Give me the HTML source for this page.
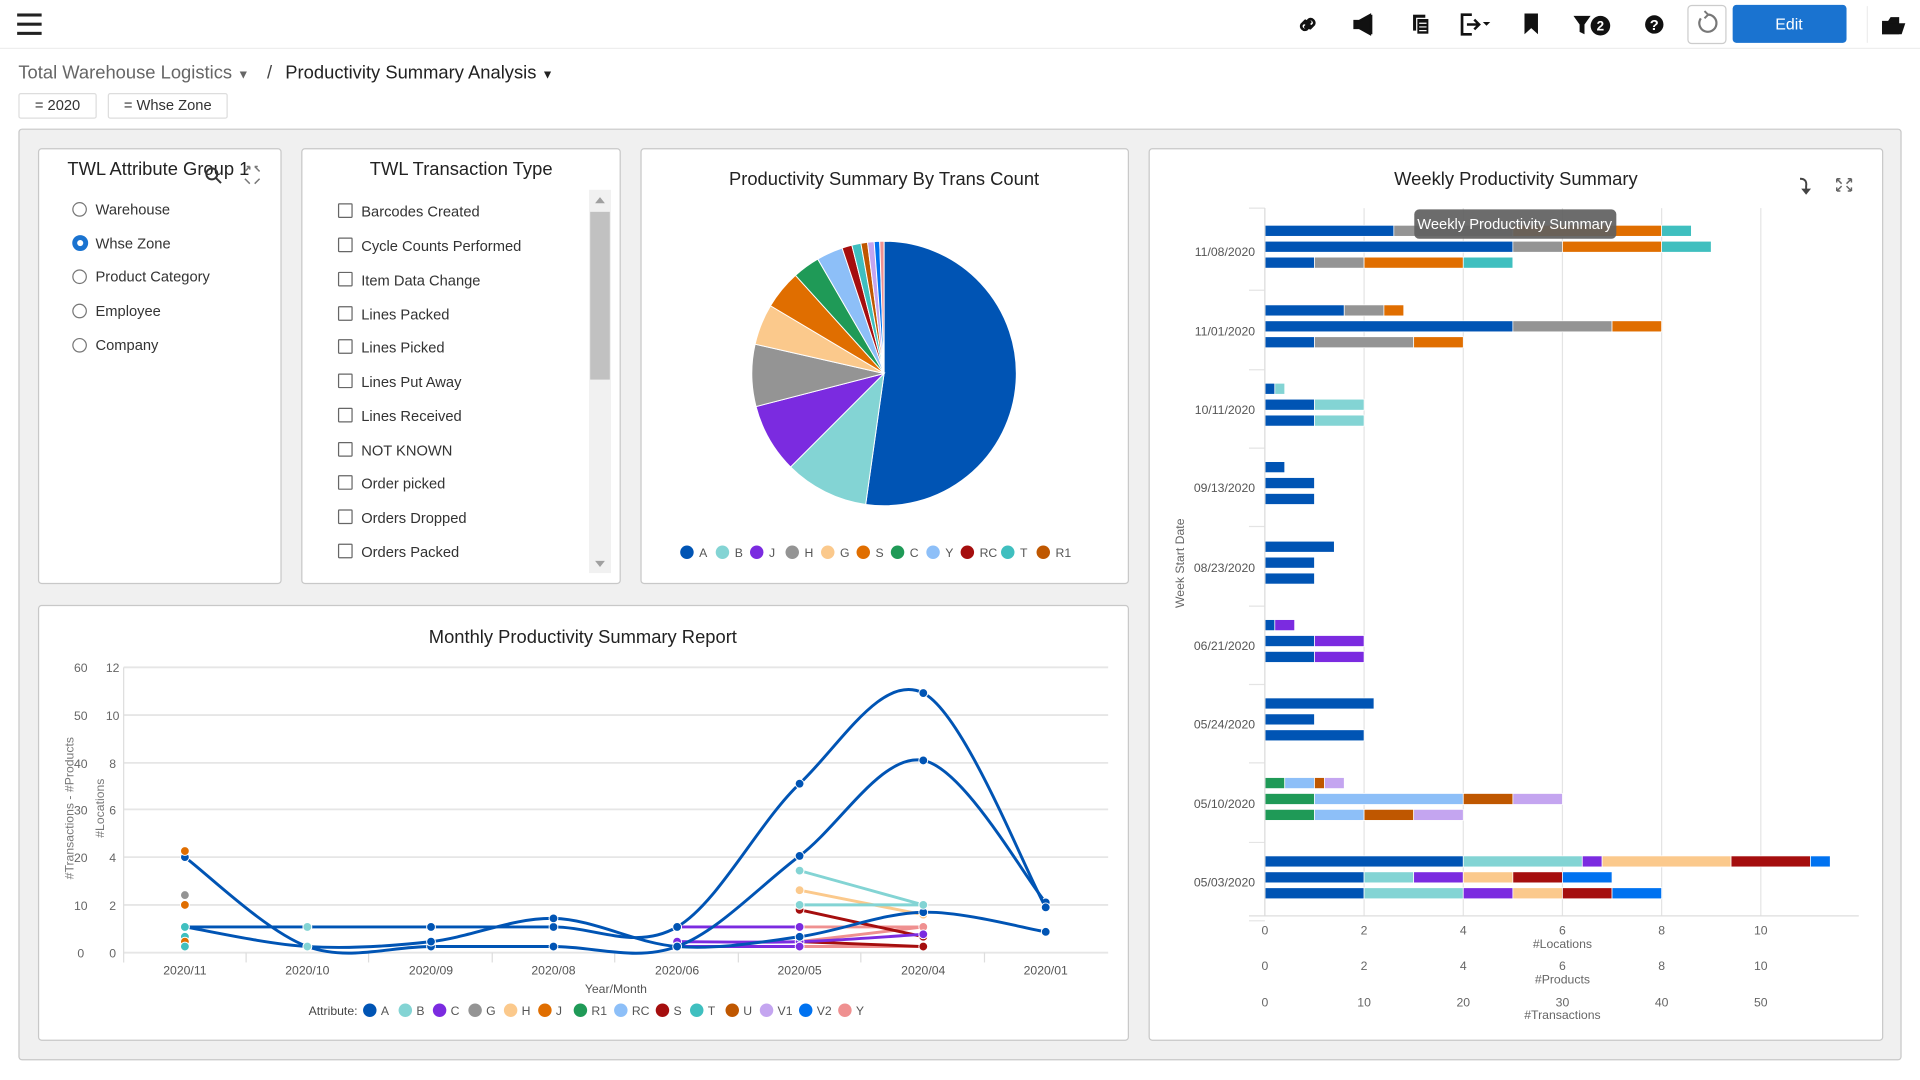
<!DOCTYPE html>
<html><head><meta charset="utf-8">
<style>
html,body{margin:0;padding:0;width:1920px;height:1080px;overflow:hidden;background:#fff;font-family:"Liberation Sans",sans-serif;}
#w{position:absolute;left:0;top:0;width:1568px;height:882px;transform:scale(1.22449);transform-origin:0 0;}
.a{position:absolute;}
.panel{position:absolute;background:#fff;border:1px solid #c8c8c8;border-radius:3px;box-sizing:border-box;}
.t{position:absolute;font-size:15px;color:#222;white-space:nowrap;}
.lbl{position:absolute;font-size:12px;color:#333;white-space:nowrap;}
.rad{position:absolute;width:10px;height:10px;border:1.5px solid #777;border-radius:50%;}
.chk{position:absolute;width:10px;height:10px;border:1.5px solid #666;border-radius:1px;}
</style></head><body>
<div id="w">
<!-- top bar -->
<div class="a" style="left:0;top:0;width:1568px;height:39px;border-bottom:1px solid #eee;"></div>
<svg class="a" style="left:0;top:0" width="1568" height="40">
 <g fill="#222">
  <rect x="14" y="11" width="20" height="2.5"/><rect x="14" y="18.5" width="20" height="2.5"/><rect x="14" y="26" width="20" height="2.5"/>
 </g>
 <g fill="none" stroke="#111" stroke-width="2.2" stroke-linecap="round">
  <path d="M1066 17 l-3 3 a3 3 0 0 0 4 4 l3 -3 M1070 23 l3 -3 a3 3 0 0 0 -4 -4 l-3 3 M1066 22 l4 -4"/>
 </g>
 <path d="M1106 17 h4 l9 -5 v16 l-9 -5 h-4z M1120 12 v16" fill="#111" stroke="#111" stroke-width="1.5"/>
 <rect x="1154" y="12" width="10" height="13" fill="#111"/><rect x="1157" y="15" width="10" height="13" fill="#111" stroke="#fff" stroke-width="1"/>
 <path d="M1159 19h6M1159 22h6M1159 25h6" stroke="#fff" stroke-width="1"/>
 <path d="M1202 12 h-8 v16 h8" fill="none" stroke="#111" stroke-width="2.2"/>
 <path d="M1198 20 h10 M1204 16 l4 4 -4 4" fill="none" stroke="#111" stroke-width="2"/>
 <path d="M1211 18 h6 l-3 3z" fill="#111"/>
 <path d="M1245 11 h11 v17 l-5.5 -5 -5.5 5z" fill="#111"/>
 <path d="M1285 13 h14 l-5 7 v8 l-4 -2 v-6z" fill="#111"/>
 <circle cx="1307" cy="21" r="8" fill="#111"/><text x="1307" y="25" font-size="11" font-weight="bold" fill="#fff" text-anchor="middle">2</text>
 <circle cx="1351" cy="20" r="7.5" fill="#111"/><text x="1351" y="24.5" font-size="12" font-weight="bold" fill="#fff" text-anchor="middle">?</text>
 <rect x="1378.5" y="4.5" width="31" height="31" rx="3" fill="#fff" stroke="#ccc"/>
 <path d="M1389 15 a7 7 0 1 0 5 -3" fill="none" stroke="#777" stroke-width="1.8"/><path d="M1392 9 l3 3 -3 3" fill="none" stroke="#777" stroke-width="1.6"/>
 <rect x="1415" y="4" width="93" height="31" rx="3" fill="#1a73d0"/>
 <text x="1461" y="24" font-size="13" fill="#fff" text-anchor="middle">Edit</text>
 <line x1="1525" y1="5" x2="1525" y2="35" stroke="#eee"/>
 <path d="M1537 17 h5 l2 -3 h7 v14 h-14z" fill="#111"/><path d="M1537 19 h19 l-3 9 h-16z" fill="#111"/>
</svg>
<!-- breadcrumb -->
<div class="a" style="left:15px;top:51px;font-size:15px;color:#666;">Total Warehouse Logistics <span style="font-size:10px">▼</span></div>
<div class="a" style="left:218px;top:51px;font-size:15px;color:#444;">/</div>
<div class="a" style="left:233px;top:51px;font-size:15px;color:#222;">Productivity Summary Analysis <span style="font-size:10px">▼</span></div>
<div class="a" style="left:15px;top:76px;width:64px;height:21px;border:1px solid #ddd;border-radius:2px;box-sizing:border-box;font-size:12px;color:#333;text-align:center;line-height:19px;">= 2020</div>
<div class="a" style="left:88px;top:76px;width:98px;height:21px;border:1px solid #ddd;border-radius:2px;box-sizing:border-box;font-size:12px;color:#333;text-align:center;line-height:19px;">= Whse Zone</div>
<!-- container -->
<div class="a" style="left:15px;top:105px;width:1538px;height:761px;background:#f0f0f0;border:1px solid #c8c8c8;border-radius:3px;box-sizing:border-box;"></div>
<!-- panel 1 -->
<div class="panel" style="left:31px;top:121px;width:199px;height:356px;"></div>
<div class="t" style="left:55px;top:130px;">TWL Attribute Group 1</div>
<div class="rad" style="left:59px;top:165px"></div><div class="lbl" style="left:78px;top:164px">Warehouse</div>
<div class="rad" style="left:59px;top:192px;border:4px solid #1a73d0;width:5px;height:5px;"></div><div class="lbl" style="left:78px;top:192px">Whse Zone</div>
<div class="rad" style="left:59px;top:220px"></div><div class="lbl" style="left:78px;top:219px">Product Category</div>
<div class="rad" style="left:59px;top:248px"></div><div class="lbl" style="left:78px;top:247px">Employee</div>
<div class="rad" style="left:59px;top:276px"></div><div class="lbl" style="left:78px;top:275px">Company</div>
<!-- panel 2 -->
<div class="panel" style="left:246px;top:121px;width:261px;height:356px;"></div>
<div class="t" style="left:302px;top:130px;">TWL Transaction Type</div>
<div class="a" style="left:481px;top:155px;width:18px;height:313px;background:#f1f1f1;"></div>
<div class="a" style="left:482px;top:173px;width:16px;height:137px;background:#c1c1c1;"></div>
<div class="chk" style="left:276px;top:166px"></div><div class="lbl" style="left:295px;top:166px">Barcodes Created</div>
<div class="chk" style="left:276px;top:194px"></div><div class="lbl" style="left:295px;top:194px">Cycle Counts Performed</div>
<div class="chk" style="left:276px;top:222px"></div><div class="lbl" style="left:295px;top:222px">Item Data Change</div>
<div class="chk" style="left:276px;top:250px"></div><div class="lbl" style="left:295px;top:250px">Lines Packed</div>
<div class="chk" style="left:276px;top:277px"></div><div class="lbl" style="left:295px;top:277px">Lines Picked</div>
<div class="chk" style="left:276px;top:305px"></div><div class="lbl" style="left:295px;top:305px">Lines Put Away</div>
<div class="chk" style="left:276px;top:333px"></div><div class="lbl" style="left:295px;top:333px">Lines Received</div>
<div class="chk" style="left:276px;top:361px"></div><div class="lbl" style="left:295px;top:361px">NOT KNOWN</div>
<div class="chk" style="left:276px;top:388px"></div><div class="lbl" style="left:295px;top:388px">Order picked</div>
<div class="chk" style="left:276px;top:416px"></div><div class="lbl" style="left:295px;top:416px">Orders Dropped</div>
<div class="chk" style="left:276px;top:444px"></div><div class="lbl" style="left:295px;top:444px">Orders Packed</div>
<!-- panels 3-5 -->
<div class="panel" style="left:523px;top:121px;width:399px;height:356px;"></div>
<div class="panel" style="left:938px;top:121px;width:600px;height:729px;"></div>
<div class="panel" style="left:31px;top:494px;width:891px;height:356px;"></div>
<svg id="s" class="a" style="left:0;top:0" width="1568" height="882" font-family="Liberation Sans, sans-serif">
 <path d="M486 166 l4 -5 4 5z M486 458 l4 5 4 -5z" fill="#a0a0a0"/>
 <g fill="none" stroke="#333" stroke-width="1.6"><circle cx="173" cy="142" r="4.5"/><path d="M176.5 145.5 l4 4"/></g>
 <g fill="none" stroke="#777" stroke-width="1.2"><path d="M200 140 l4 -4 M204 136 h-2.5 M204 136 v2.5 M212 140 l-4 -4 M208 136 h2.5 M212 140 v0 M200 146 l4 4 M212 146 l-4 4"/></g>
 <g fill="none" stroke="#666" stroke-width="1.2"><path d="M1500 146 l4 4 M1512 146 l-4 4 M1500 156 l4 -4 M1512 156 l-4 -4 M1500 146 v3 M1500 146 h3 M1512 146 v3 M1512 146 h-3 M1500 156 v-3 M1500 156 h3 M1512 156 v-3 M1512 156 h-3"/></g>
 <path d="M1470 146 q6 0 5 6 v5" fill="none" stroke="#444" stroke-width="1.6"/><path d="M1471 154 l4 5 4 -5z" fill="#444"/>
 <text x="722" y="151" font-size="15" fill="#222" text-anchor="middle">Productivity Summary By Trans Count</text>
 <text x="1238" y="151" font-size="15" fill="#222" text-anchor="middle">Weekly Productivity Summary</text>
 <text x="476" y="525" font-size="15" fill="#222" text-anchor="middle">Monthly Productivity Summary Report</text>
 <g id="pie"></g><g id="pleg" font-size="10" fill="#555"></g>
 <g id="wk"></g>
 <g id="mo"></g>
</svg>
</div>
<script>
var NS="http://www.w3.org/2000/svg";
function el(p,t,a,txt){var e=document.createElementNS(NS,t);for(var k in a)e.setAttribute(k,a[k]);if(txt!=null)e.textContent=txt;p.appendChild(e);return e;}
var C={A:"#0054b4",B:"#83d4d4",J:"#7b2be0",G:"#949494",H:"#fbc98c",S:"#e06e00",C:"#1f9a57",Y:"#8dbff8",RC:"#a50e0e",T:"#3fbfbf",R1:"#bf5700",V1:"#c4a5f0",V2:"#0072f0",P:"#ef9090",O:"#e06e00",U:"#bf5700"};
// pie
var pie=document.getElementById("pie"),cx=722,cy=305,r=108;
var sl=[["A",0,188],["B",188,225],["J",225,255.5],["G",255.5,282.8],["H",282.8,300.8],["S",300.8,317.9],["C",317.9,329.9],["Y",329.9,341.5],["RC",341.5,345.9],["T",345.9,349.9],["R1",349.9,352.8],["V1",352.8,355.7],["V2",355.7,358.1],["P",358.1,360]];
function pt(a){a=a*Math.PI/180;return [cx+r*Math.sin(a),cy-r*Math.cos(a)];}
sl.forEach(function(s){var p1=pt(s[1]),p2=pt(s[2]);var lg=(s[2]-s[1])>180?1:0;
 el(pie,"path",{d:"M"+cx+" "+cy+"L"+p1[0]+" "+p1[1]+"A"+r+" "+r+" 0 "+lg+" 1 "+p2[0]+" "+p2[1]+"Z",fill:C[s[0]],stroke:"#fff","stroke-width":"0.8"});});
var pl=document.getElementById("pleg");
[["A",561],["B",590],["J",618],["H",647],["G",676],["S",705],["C",733],["Y",762],["RC",790],["T",823],["R1",852]].forEach(function(l){
 el(pl,"circle",{cx:l[1],cy:451,r:5.5,fill:C[l[0]=="H"?"G":l[0]=="G"?"H":l[0]]});el(pl,"text",{x:l[1]+10,y:455},l[0]);});
// weekly
var wk=document.getElementById("wk"),x0=1033,u=40.5;
for(var i=0;i<=5;i++){var gx=x0+i*81;el(wk,"line",{x1:gx,y1:170,x2:gx,y2:748,stroke:"#e4e4e4"});
 el(wk,"text",{x:gx,y:763,"font-size":10,fill:"#666","text-anchor":"middle"},i*2);
 el(wk,"text",{x:gx,y:792,"font-size":10,fill:"#666","text-anchor":"middle"},i*2);
 el(wk,"text",{x:gx,y:822,"font-size":10,fill:"#666","text-anchor":"middle"},i*10);}
el(wk,"line",{x1:1020,y1:748,x2:1518,y2:748,stroke:"#ddd"});
el(wk,"text",{x:1276,y:774,"font-size":10,fill:"#666","text-anchor":"middle"},"#Locations");
el(wk,"text",{x:1276,y:803,"font-size":10,fill:"#666","text-anchor":"middle"},"#Products");
el(wk,"text",{x:1276,y:832,"font-size":10,fill:"#666","text-anchor":"middle"},"#Transactions");
el(wk,"text",{x:967,y:460,"font-size":10,fill:"#666","text-anchor":"middle",transform:"rotate(-90 967 460)"},"Week Start Date");
var G=[["11/08/2020",205,[[["A",2.6],["G",5],["S",8],["T",8.6]],[["A",5],["G",6],["S",8],["T",9]],[["A",1],["G",2],["S",4],["T",5]]]],
["11/01/2020",270,[[["A",1.6],["G",2.4],["S",2.8]],[["A",5],["G",7],["S",8]],[["A",1],["G",3],["S",4]]]],
["10/11/2020",334,[[["A",0.2],["B",0.4]],[["A",1],["B",2]],[["A",1],["B",2]]]],
["09/13/2020",398,[[["A",0.4]],[["A",1]],[["A",1]]]],
["08/23/2020",463,[[["A",1.4]],[["A",1]],[["A",1]]]],
["06/21/2020",527,[[["A",0.2],["J",0.6]],[["A",1],["J",2]],[["A",1],["J",2]]]],
["05/24/2020",591,[[["A",2.2]],[["A",1]],[["A",2]]]],
["05/10/2020",656,[[["C",0.4],["Y",1],["U",1.2],["V1",1.6]],[["C",1],["Y",4],["U",5],["V1",6]],[["C",1],["Y",2],["U",3],["V1",4]]]],
["05/03/2020",720,[[["A",4],["B",6.4],["J",6.8],["H",9.4],["RC",11],["V2",11.4]],[["A",2],["B",3],["J",4],["H",5],["RC",6],["V2",7]],[["A",2],["B",4],["J",5],["H",6],["RC",7],["V2",8]]]]];
G.forEach(function(g,gi){var y=g[1];el(wk,"text",{x:1025,y:y+4,"font-size":10,fill:"#555","text-anchor":"end"},g[0]);
 el(wk,"line",{x1:1020,y1:y+32,x2:1033,y2:y+32,stroke:"#e4e4e4"});
 g[2].forEach(function(b,bi){var by=y-21+bi*13,s=0;b.forEach(function(seg){
  el(wk,"rect",{x:x0+s*u,y:by,width:(seg[1]-s)*u,height:9,fill:C[seg[0]],stroke:"#fff","stroke-width":0.6});s=seg[1];});});});
el(wk,"line",{x1:1020,y1:170,x2:1033,y2:170,stroke:"#e4e4e4"});
el(wk,"line",{x1:1033,y1:170,x2:1033,y2:748,stroke:"#ddd"});
el(wk,"rect",{x:1155,y:171,width:165,height:24,rx:4,fill:"rgba(95,95,95,0.92)"});
el(wk,"text",{x:1237,y:187,"font-size":12,fill:"#fff","text-anchor":"middle"},"Weekly Productivity Summary");
// monthly
var mo=document.getElementById("mo");
var ys=[545,584,623,661,700,739,778],lv=["60","50","40","30","20","10","0"],rv=["12","10","8","6","4","2","0"];
ys.forEach(function(y,i){el(mo,"line",{x1:101,y1:y,x2:905,y2:y,stroke:"#e6e6e6","stroke-width":1.5});
 el(mo,"text",{x:66,y:y+4,"font-size":10,fill:"#666","text-anchor":"middle"},lv[i]);
 el(mo,"text",{x:92,y:y+4,"font-size":10,fill:"#666","text-anchor":"middle"},rv[i]);});
el(mo,"line",{x1:101,y1:545,x2:101,y2:786,stroke:"#ddd"});
var xs=[151,251,352,452,553,653,754,854],xl=["2020/11","2020/10","2020/09","2020/08","2020/06","2020/05","2020/04","2020/01"];
xs.forEach(function(x,i){el(mo,"text",{x:x,y:796,"font-size":10,fill:"#555","text-anchor":"middle"},xl[i]);if(i<7)el(mo,"line",{x1:x+50,y1:778,x2:x+50,y2:786,stroke:"#ddd"});});
el(mo,"text",{x:503,y:811,"font-size":10,fill:"#555","text-anchor":"middle"},"Year/Month");
el(mo,"text",{x:60,y:660,"font-size":10,fill:"#777","text-anchor":"middle",transform:"rotate(-90 60 660)"},"#Transactions  -  #Products");
el(mo,"text",{x:85,y:660,"font-size":10,fill:"#777","text-anchor":"middle",transform:"rotate(-90 85 660)"},"#Locations");
function cr(p){var d="M"+p[0][0]+" "+p[0][1];for(var i=0;i<p.length-1;i++){var p0=p[i-1]||p[i],p1=p[i],p2=p[i+1],p3=p[i+2]||p2;
 d+="C"+(p1[0]+(p2[0]-p0[0])/6)+" "+(p1[1]+(p2[1]-p0[1])/6)+" "+(p2[0]-(p3[0]-p1[0])/6)+" "+(p2[1]-(p3[1]-p1[1])/6)+" "+p2[0]+" "+p2[1];}return d;}
function line(c,p,dots){el(mo,"path",{d:cr(p),fill:"none",stroke:c,"stroke-width":2.4});if(dots!==false)p.forEach(function(q){el(mo,"circle",{cx:q[0],cy:q[1],r:3.6,fill:c,stroke:"#fff","stroke-width":0.8});});}
line(C.P,[[653,757],[754,757]]);line(C.P,[[653,769],[754,757]]);line(C.P,[[653,773],[754,773]]);
line(C.RC,[[653,743],[754,765]]);line(C.RC,[[653,769],[754,773]]);
line(C.H,[[653,727],[754,747]]);
line(C.B,[[653,711],[754,739]]);line(C.B,[[653,739],[754,739]]);
line(C.J,[[553,757],[653,757]]);line(C.J,[[553,769],[653,769],[754,763]]);line(C.J,[[553,773],[653,773]]);
line(C.A,[[151,700],[251,773],[352,773],[452,773],[553,773],[653,699],[754,621],[854,737]]);
line(C.A,[[151,757],[251,757],[352,757],[452,757],[553,757],[653,640],[754,566],[854,741]]);
line(C.A,[[151,757],[251,773],[352,769],[452,750],[553,773],[653,765],[754,745],[854,761]]);
[[151,695,C.O],[151,731,C.G],[151,739,C.O],[151,757,C.T],[151,765,C.T],[151,769,C.O],[151,773,C.T],[251,757,C.B],[251,773,C.B],[653,711,C.B],[653,739,C.B],[754,739,C.B]].forEach(function(d){el(mo,"circle",{cx:d[0],cy:d[1],r:3.6,fill:d[2],stroke:"#fff","stroke-width":0.8});});
el(mo,"text",{x:292,y:829,"font-size":10,fill:"#444","text-anchor":"end"},"Attribute:");
[["A",302],["B",331],["C",359,"J"],["G",388],["H",417],["J",445,"S"],["R1",474,"C"],["RC",507,"Y"],["S",541,"RC"],["T",569],["U",598],["V1",626],["V2",658],["Y",690,"P"]].forEach(function(l){
 el(mo,"circle",{cx:l[1],cy:825,r:5.5,fill:C[l[2]||l[0]]});el(mo,"text",{x:l[1]+9,y:829,"font-size":10,fill:"#555"},l[0]);});
</script>
</body></html>
